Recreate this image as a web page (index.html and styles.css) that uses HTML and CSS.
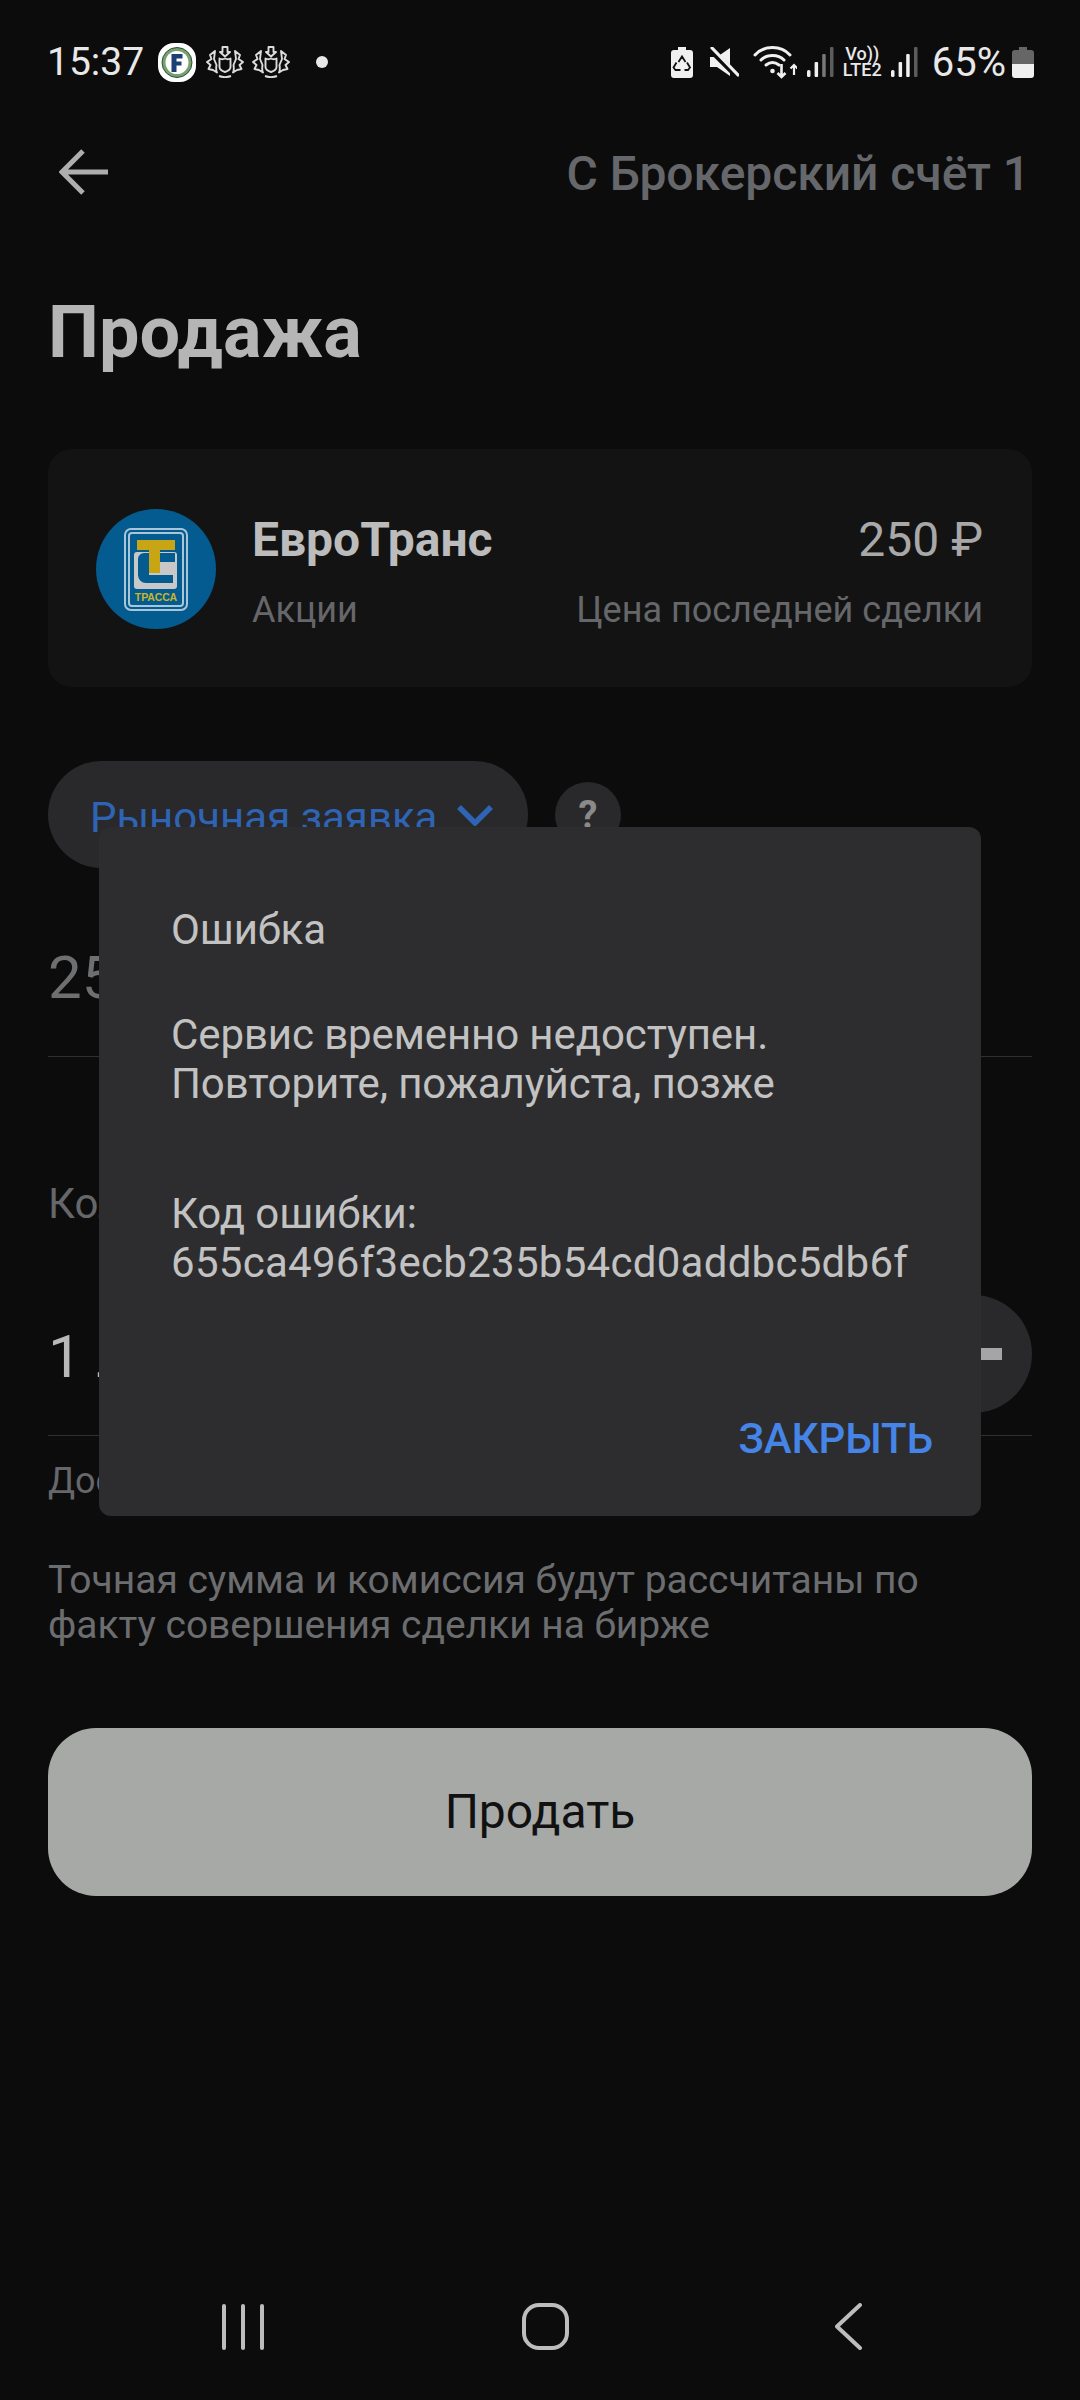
FILE: index.html
```html
<!DOCTYPE html>
<html lang="ru">
<head>
    <meta charset="UTF-8">
    <meta name="viewport" content="width=device-width, initial-scale=1.0">
    <title>Продажа</title>
    <link rel="stylesheet" href="styles.css">
</head>
<body>
    <div class="screen">
        <div class="status-bar">
            <div class="status-left">
                <span class="clock">15:37</span>
                <svg class="ic-fin" width="38" height="39" viewBox="0 0 38 39">
                    <rect width="38" height="39" rx="16" fill="#fff"/>
                    <circle cx="19" cy="19.5" r="15" fill="#7aa06c" stroke="#24503f" stroke-width="1"/>
                    <circle cx="19" cy="19.5" r="11.5" fill="#fff"/>
                    <path d="M13.500 11h11v4.500h-6v3h5v4h-5v6.500h-5z" fill="#1c3f74"/>
                </svg>
                <svg class="ic-crest" width="38" height="32" viewBox="0 0 38 32" fill="none" stroke="#dcdcdc" stroke-width="1.900" stroke-linejoin="round">
                    <path d="M16.500 1h5v5h2.500L19 10.500 14 6h2.500z"/>
                    <path d="M13.500 12.500c2 1 3.500 1 5.500 0 2 1 3.500 1 5.500 0v8.500c0 2.500-2.500 4-5.500 5-3-1-5.500-2.500-5.500-5z"/>
                    <path d="M9 5L4 9l1.500 4L1 16l3.500 3-2 4 4.500 1 4 2.500c-1-2-1-4.500-.5-7.500L8 13z"/>
                    <path d="M29 5l5 4-1.500 4 4.500 3-3.500 3 2 4-4.500 1-4 2.500c1-2 1-4.500.5-7.500L30 13z"/>
                    <path d="M13 30c4 1.500 8 1.500 12 0"/>
                </svg>
                <svg class="ic-crest next" width="38" height="32" viewBox="0 0 38 32" fill="none" stroke="#dcdcdc" stroke-width="1.900" stroke-linejoin="round">
                    <path d="M16.500 1h5v5h2.500L19 10.500 14 6h2.500z"/>
                    <path d="M13.500 12.500c2 1 3.500 1 5.500 0 2 1 3.500 1 5.500 0v8.500c0 2.500-2.500 4-5.500 5-3-1-5.500-2.500-5.500-5z"/>
                    <path d="M9 5L4 9l1.500 4L1 16l3.500 3-2 4 4.500 1 4 2.500c-1-2-1-4.500-.5-7.500L8 13z"/>
                    <path d="M29 5l5 4-1.500 4 4.500 3-3.500 3 2 4-4.500 1-4 2.500c1-2 1-4.500.5-7.500L30 13z"/>
                    <path d="M13 30c4 1.500 8 1.500 12 0"/>
                </svg>
                <span class="dot"></span>
            </div>
            <div class="status-right">
                <svg class="ic-recycle" width="22" height="31" viewBox="0 0 22 31">
                    <path d="M7 0h8v3h4a3 3 0 0 1 3 3v22a3 3 0 0 1-3 3H3a3 3 0 0 1-3-3V6a3 3 0 0 1 3-3h4z" fill="#f0f0f0"/>
                    <path d="M7.500 15l3.500-5.500 3.500 5.500M16 15.500l3 5-2 2.500h-3.500M5.500 15.500l-3 5 2 2.500h5" fill="none" stroke="#111" stroke-width="1.800"/>
                </svg>
                <svg class="ic-mute" width="29" height="30" viewBox="0 0 29 30">
                    <path d="M0 10h7L20 1v28L7 20H0z" fill="#f0f0f0"/>
                    <path d="M0 2l27 27" stroke="#0c0c0d" stroke-width="6"/>
                    <path d="M2 1l26 27" stroke="#f0f0f0" stroke-width="3.200" stroke-linecap="round"/>
                </svg>
                <svg class="ic-wifi" width="44" height="33" viewBox="0 0 44 33" fill="none" stroke="#f0f0f0">
                    <path d="M2 9C11 -1 28 -1 37 9" stroke-width="3" stroke-linecap="round"/>
                    <path d="M8 14c6-6 17-6 23 0" stroke-width="3" stroke-linecap="round"/>
                    <path d="M13 19c4-3 9-3 13 0" stroke-width="3" stroke-linecap="round"/>
                    <circle cx="19.500" cy="25" r="2.300" fill="#f0f0f0" stroke="none"/>
                    <path d="M28.500 18v13M24.500 27l4 4 4-4" stroke-width="2.600"/>
                    <path d="M41 29V19M37.500 22.500l3.500-3.500 3.500 3.500" stroke-width="2.200"/>
                </svg>
                <svg class="ic-signal" width="27" height="30" viewBox="0 0 27 30">
                    <rect x="0" y="23" width="3.500" height="7" rx="1.500" fill="#f0f0f0"/>
                    <rect x="7.600" y="15" width="3.500" height="15" rx="1" fill="#f0f0f0"/>
                    <rect x="15.200" y="7" width="3.500" height="23" rx="1" fill="#777"/>
                    <rect x="23" y="0" width="3.500" height="30" rx="1" fill="#5c5c5c"/>
                </svg>
                <div class="volte"><span>Vo))</span><span>LTE2</span></div>
                <svg class="ic-signal" width="27" height="30" viewBox="0 0 27 30">
                    <rect x="0" y="23" width="3.500" height="7" rx="1.500" fill="#f0f0f0"/>
                    <rect x="7.600" y="15" width="3.500" height="15" rx="1" fill="#f0f0f0"/>
                    <rect x="15.200" y="7" width="3.500" height="23" rx="1" fill="#f0f0f0"/>
                    <rect x="23" y="0" width="3.500" height="30" rx="1" fill="#5c5c5c"/>
                </svg>
                <span class="percent">65%</span>
                <svg class="ic-battery" width="22" height="31" viewBox="0 0 22 31">
                    <path d="M7 0h8v3h4a3 3 0 0 1 3 3v11H0V6a3 3 0 0 1 3-3h4z" fill="#666"/>
                    <path d="M0 17h22v11a3 3 0 0 1-3 3H3a3 3 0 0 1-3-3z" fill="#f0f0f0"/>
                </svg>
            </div>
        </div>

        <div class="header">
            <svg width="50" height="46" viewBox="0 0 50 46" fill="none" stroke="#aeaeae" stroke-width="5">
                <path d="M49 23H4M24 2L3 23l21 21"/>
            </svg>
            <span class="account">С Брокерский счёт 1</span>
        </div>

        <h1 class="page-title">Продажа</h1>

        <div class="card">
            <svg class="logo" width="120" height="120" viewBox="0 0 120 120">
                <circle cx="60" cy="60" r="60" fill="#045b90"/>
                <rect x="29" y="20" width="62" height="81" rx="6" fill="none" stroke="#a9c6d8" stroke-width="2"/>
                <rect x="33" y="24" width="54" height="73" rx="3" fill="none" stroke="#a9c6d8" stroke-width="2"/>
                <rect x="38" y="43" width="43" height="37" rx="3" fill="#c8c8c8"/>
                <path d="M48 44h5v22h24v8H50a8 8 0 0 1-8-8V50a6 6 0 0 1 6-6z" fill="#045b90"/>
                <path d="M64 44h15v9H64z" fill="#045b90"/>
                <path d="M41 31h38v10H64v23H53V41H41z" fill="#c7a514"/>
                <text class="logo-text" x="60" y="92" text-anchor="middle">ТРАССА</text>
            </svg>
            <div class="card-info">
                <div class="card-row">
                    <span class="stock-name">ЕвроТранс</span>
                    <span class="stock-price">250 ₽</span>
                </div>
                <div class="card-row sub">
                    <span>Акции</span>
                    <span>Цена последней сделки</span>
                </div>
            </div>
        </div>

        <div class="order-row">
            <div class="order-pill">
                <span class="order-type">Рыночная заявка</span>
                <svg width="36" height="22" viewBox="0 0 36 22" fill="none" stroke="#2f64b4" stroke-width="5.500">
                    <path d="M2 3l16 16L34 3"/>
                </svg>
            </div>
            <div class="help">?</div>
        </div>

        <div class="field-price">250 ₽</div>

        <div class="label-qty">Количество</div>
        <div class="qty-row">
            <span class="qty-value">1 лот</span>
            <div class="qty-btn"><span class="minus"></span></div>
        </div>
        <div class="available">Доступно 1 лот</div>

        <p class="note">Точная сумма и комиссия будут рассчитаны по<br>факту совершения сделки на бирже</p>

        <div class="sell-btn">Продать</div>

        <div class="nav-bar">
            <svg class="nav-recent" width="42" height="46" viewBox="0 0 42 46" fill="#bdbdbd">
                <rect x="0" y="0" width="4" height="46" rx="2"/>
                <rect x="19" y="0" width="4" height="46" rx="2"/>
                <rect x="38" y="0" width="4" height="46" rx="2"/>
            </svg>
            <svg class="nav-home" width="47" height="47" viewBox="0 0 47 47" fill="none" stroke="#bdbdbd" stroke-width="4">
                <rect x="2" y="2" width="43" height="43" rx="15"/>
            </svg>
            <svg class="nav-back" width="27" height="47" viewBox="0 0 27 47" fill="none" stroke="#bdbdbd" stroke-width="4" stroke-linecap="round" stroke-linejoin="round">
                <path d="M25 2L2 23.500 25 45"/>
            </svg>
        </div>

        <div class="dialog">
            <div class="dialog-title">Ошибка</div>
            <div class="dialog-msg">Сервис временно недоступен.<br>Повторите, пожалуйста, позже</div>
            <div class="dialog-code">Код ошибки:<br><span class="error-id">655ca496f3ecb235b54cd0addbc5db6f</span></div>
            <div class="dialog-actions">
                <span class="dialog-close">ЗАКРЫТЬ</span>
            </div>
        </div>
    </div>
</body>
</html>
```

FILE: styles.css
```css
* {
    box-sizing: border-box;
}
body {
    margin: 0;
    background: #0c0c0d;
    font-family: Roboto, "Noto Sans", sans-serif;
}
.screen {
    position: relative;
    width: 1080px;
    height: 2400px;
    overflow: hidden;
    padding: 0 48px;
    background: #0c0c0d;
}

/* status bar */
.status-bar {
    display: flex;
    justify-content: space-between;
    align-items: center;
    height: 124px;
    margin: 0 -2px 0 -1px;
    color: #e8e8e8;
}
.status-left,
.status-right {
    display: flex;
    align-items: center;
}
.clock {
    font-size: 39px;
    margin-right: 14px;
}
.ic-fin {
    margin-right: 10px;
}
.ic-crest.next {
    margin-left: 8px;
}
.dot {
    width: 12px;
    height: 12px;
    margin-left: 26px;
    border-radius: 50%;
    background: #e8e8e8;
}
.ic-recycle {
    margin-right: 17px;
}
.ic-mute {
    margin-right: 14px;
}
.ic-wifi {
    margin-right: 10px;
}
.ic-signal {
    margin-right: 9px;
}
.volte {
    display: flex;
    flex-direction: column;
    align-items: center;
    width: 39px;
    margin-right: 9px;
    font-size: 18px;
    font-weight: 500;
    line-height: 16px;
}
.percent {
    font-size: 40px;
    margin: 0 6px 0 5px;
}

/* header */
.header {
    display: flex;
    justify-content: space-between;
    align-items: center;
    height: 96px;
    padding: 0 2px 0 11px;
}
.account {
    padding-top: 3px;
    color: #65676b;
    font-size: 48px;
    font-weight: 500;
    letter-spacing: -0.05px;
}
.page-title {
    margin: 73px 0 76px;
    color: #b5b5b5;
    font-size: 72px;
    font-weight: 700;
    line-height: 80px;
}

/* instrument card */
.card {
    display: flex;
    gap: 36px;
    height: 238px;
    padding: 60px 49px 0 48px;
    border-radius: 24px;
    background: #131314;
}
.logo-text {
    fill: #c9b52a;
    font-family: "Liberation Sans", sans-serif;
    font-size: 10.500px;
    font-weight: 700;
}
.card-info {
    flex: 1;
    padding-top: 3px;
}
.card-row {
    display: flex;
    justify-content: space-between;
    height: 56px;
    font-size: 48px;
    line-height: 56px;
}
.stock-name {
    color: #bcbcbc;
    font-weight: 700;
}
.stock-price {
    color: #a8a8a8;
}
.card-row.sub {
    height: 44px;
    margin-top: 20px;
    color: #66676a;
    font-size: 36px;
    line-height: 44px;
}

/* order type */
.order-row {
    display: flex;
    align-items: center;
    gap: 27px;
    margin-top: 74px;
}
.order-pill {
    display: flex;
    align-items: center;
    justify-content: space-between;
    width: 480px;
    height: 107px;
    padding: 0 35px 0 42px;
    border-radius: 54px;
    background: #29292b;
    color: #2f64b4;
    font-size: 42px;
}
.order-type {
    padding-top: 5px;
}
.help {
    width: 66px;
    height: 66px;
    border-radius: 50%;
    background: #29292b;
    color: #8a8a8a;
    font-size: 38px;
    font-weight: 700;
    line-height: 66px;
    text-align: center;
}
.field-price {
    height: 114px;
    margin-top: 75px;
    border-bottom: 1px solid #303031;
    color: #6e6f71;
    font-size: 60px;
    line-height: 70px;
}
.label-qty {
    margin-top: 123px;
    color: #66676a;
    font-size: 42px;
    line-height: 48px;
}
.qty-row {
    display: flex;
    justify-content: space-between;
    height: 141px;
    margin-top: 67px;
    border-bottom: 1px solid #303031;
}
.qty-value {
    padding-top: 27px;
    color: #b8b8b8;
    font-size: 60px;
    line-height: 70px;
}
.qty-btn {
    display: flex;
    align-items: center;
    justify-content: center;
    width: 118px;
    height: 118px;
    border-radius: 50%;
    background: #29292b;
}
.minus {
    width: 58px;
    height: 12px;
    background: #a5a5a5;
}
.available {
    margin-top: 23px;
    color: #66676a;
    font-size: 36px;
    line-height: 44px;
}
.note {
    margin: 55px 0 0;
    color: #6c6d6f;
    font-size: 39px;
    line-height: 45px;
    letter-spacing: -0.03px;
}
.sell-btn {
    height: 168px;
    margin-top: 80px;
    border-radius: 48px;
    background: #a7a9a7;
    color: #111;
    font-size: 48px;
    line-height: 168px;
    text-align: center;
}

/* system navigation */
.nav-bar {
    display: flex;
    align-items: center;
    height: 47px;
    margin-top: 407px;
    padding-left: 174px;
}
.nav-home {
    margin-left: 258px;
}
.nav-back {
    margin-left: 266px;
}

/* error dialog */
.dialog {
    position: absolute;
    top: 827px;
    left: 99px;
    display: flex;
    flex-direction: column;
    width: 882px;
    height: 689px;
    padding: 78px 48px 53px 72px;
    border-radius: 12px;
    background: #2d2d2f;
    color: #c2c2c2;
    font-size: 42px;
    line-height: 49px;
    letter-spacing: -0.1px;
}
.dialog-msg {
    margin-top: 56px;
}
.dialog-code {
    margin-top: 81px;
}
.error-id {
    letter-spacing: 0.28px;
}
.dialog-actions {
    display: flex;
    justify-content: flex-end;
    margin-top: auto;
}
.dialog-close {
    color: #4585e8;
    font-size: 42px;
    font-weight: 500;
    line-height: 48px;
}
```
